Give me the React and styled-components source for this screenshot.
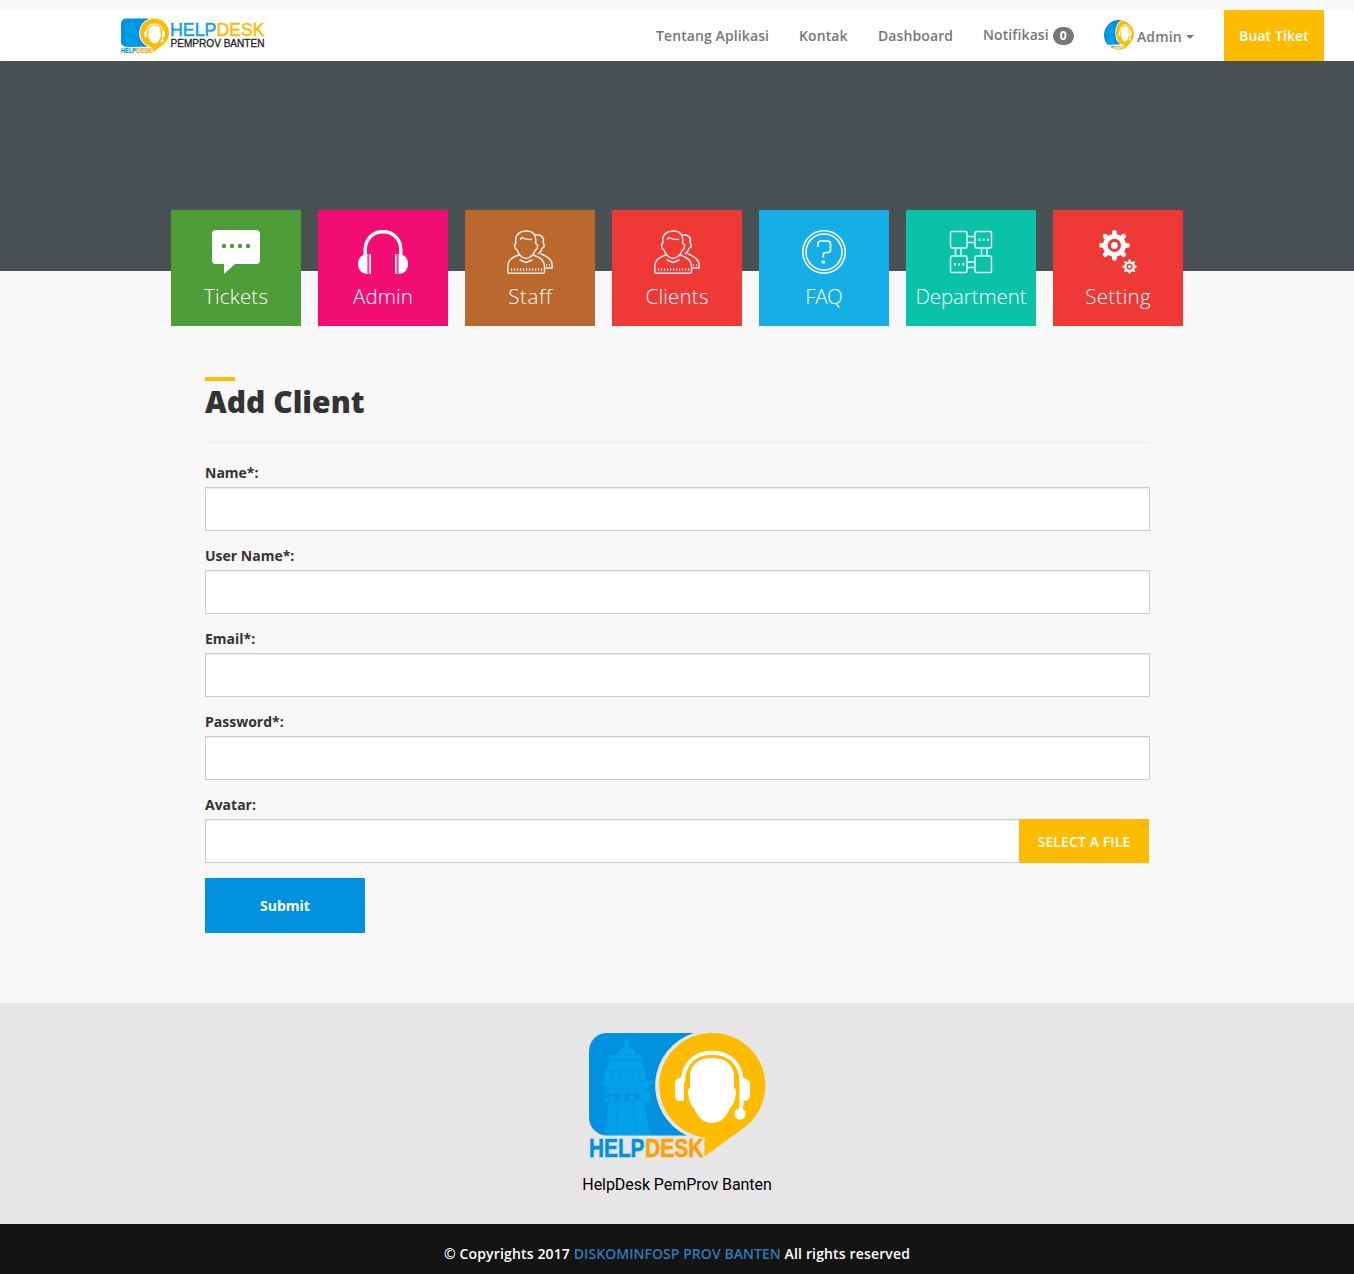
import React from 'react';
import styled, { createGlobalStyle } from 'styled-components';

const GlobalStyle = createGlobalStyle`
  * { box-sizing: border-box; }
  body {
    margin: 0;
    background: #f8f8f8;
    color: #333;
    font-family: 'Open Sans', sans-serif;
    font-size: 14px;
    overflow-x: hidden;
  }
  svg { display: block; flex: none; overflow: visible; }
`;

const Page = styled.div`
  display: flex;
  flex-direction: column;
  padding-top: 10px;
`;

const Navbar = styled.header`
  display: flex;
  justify-content: space-between;
  height: 51px;
  padding: 0 30px 0 121px;
  background: #fff;
  border-radius: 4px;
`;

const Brand = styled.a`
  display: flex;
  padding-top: 8px;
`;

const Menu = styled.nav`
  display: flex;
`;

const MenuItem = styled.a`
  display: flex;
  align-items: center;
  justify-content: ${(p) => (p.$center ? 'center' : 'flex-start')};
  gap: ${(p) => p.$gap || 0}px;
  width: ${(p) => p.$width}px;
  padding: 0 ${(p) => (p.$center ? 0 : 15)}px;
  background: ${(p) => (p.$highlight ? '#fdbc02' : 'transparent')};
  color: ${(p) => (p.$highlight ? '#fff' : '#777')};
  margin-left: ${(p) => (p.$highlight ? 15 : 0)}px;
  font-weight: 600;
  line-height: 20px;
  letter-spacing: 0.1px;
  white-space: nowrap;
`;

const Badge = styled.span`
  width: 21px;
  height: 18px;
  border-radius: 10px;
  background: #777;
  color: #fff;
  font-size: 12px;
  font-weight: 700;
  line-height: 18px;
  text-align: center;
`;

const Avatar = styled.span`
  width: 30px;
  height: 30px;
  margin-top: -1px;
  border-radius: 50%;
  overflow: hidden;
`;

const MenuLabel = styled.span`
  margin-top: ${(p) => p.$shift}px;
`;

const Caret = styled.span`
  margin: 3px 0 0 1px;
  border-top: 4px solid #777;
  border-left: 4px solid transparent;
  border-right: 4px solid transparent;
`;

const Hero = styled.div`
  height: 210px;
  background: #4a5152;
`;

const Tiles = styled.div`
  display: flex;
  justify-content: center;
  gap: 17px;
  margin-top: -61px;
`;

const Tile = styled.a`
  display: flex;
  flex-direction: column;
  align-items: center;
  width: 130px;
  height: 116px;
  padding-top: 20px;
  background: ${(p) => p.$color};
  color: #fff;
`;

const TileLabel = styled.span`
  margin-top: 7px;
  font-size: 20.5px;
  font-weight: 300;
  line-height: 30px;
  letter-spacing: ${(p) => p.$spacing}px;
  margin-right: ${(p) => -p.$spacing}px;
  white-space: nowrap;
`;

const Main = styled.main`
  width: 945px;
  height: 626px;
  margin: 51px 0 0 205px;
`;

const Title = styled.h1`
  margin: 0 0 20px;
  padding-bottom: 20px;
  border-bottom: 1px solid #eee;
  font-size: 30px;
  font-weight: 800;
  line-height: 41px;
  &::before {
    content: '';
    display: block;
    width: 30px;
    height: 4px;
    background: #fdbc02;
  }
`;

const Field = styled.div`
  display: flex;
  flex-direction: column;
  gap: 5px;
  margin-bottom: 15px;
`;

const Label = styled.label`
  font-weight: 700;
  line-height: 19px;
`;

const Input = styled.input`
  flex: 1;
  width: 100%;
  min-width: 0;
  height: 44px;
  flex-basis: 44px;
  border: 1px solid #ccc;
  border-right-width: ${(p) => (p.$joined ? 0 : 1)}px;
  border-radius: 0;
  background: #fff;
  box-shadow: inset 0 1px 1px rgba(0, 0, 0, 0.075);
  outline: none;
`;

const FileRow = styled.div`
  display: flex;
  height: 44px;
  padding-right: 1px;
`;

const FileButton = styled.button`
  width: 130px;
  padding: 1px 0 0;
  border: 0;
  background: #fdbc02;
  color: #fff;
  font: 600 14px/20px 'Open Sans', sans-serif;
  letter-spacing: 0.1px;
`;

const Submit = styled.button`
  width: 160px;
  height: 55px;
  border: 0;
  background: #0291de;
  color: #fff;
  font: 700 14px 'Open Sans', sans-serif;
`;

const Footer = styled.footer`
  display: flex;
  flex-direction: column;
  align-items: center;
  height: 221px;
  padding-top: 30px;
  background: #e6e6e6;
`;

const FooterName = styled.p`
  margin: 16px 0 0;
  color: #000;
  font: 16px/22px Roboto, sans-serif;
  letter-spacing: -0.06px;
`;

const Copyright = styled.div`
  height: 50px;
  padding-top: 20px;
  background: #141414;
  color: #fff;
  font-weight: 600;
  line-height: 20px;
  letter-spacing: 0.15px;
  text-align: center;
`;

const CopyLink = styled.a`
  color: #337ab7;
  letter-spacing: 0.05px;
`;

function Word({ x, y, width, size, color, weight = 400, stroke = 0.3, children }) {
  return (
    <text
      x={x}
      y={y}
      textLength={width}
      lengthAdjust="spacingAndGlyphs"
      fontFamily="Liberation Sans, sans-serif"
      fontWeight={weight}
      fontSize={size}
      fill={color}
      stroke={color}
      strokeWidth={stroke}
    >
      {children}
    </text>
  );
}

function Emblem({ width, height, ...rest }) {
  return (
    <svg width={width} height={height} viewBox="0 0 176 125" preserveAspectRatio="none" {...rest}>
      <path d="M18 0H105A55 55 0 0 0 98 102.500H18A18 18 0 0 1 0 84.500V18A18 18 0 0 1 18 0Z" fill="#0291de" />
      <g fill="#02a1ea">
        <path d="M37.500 3L39 8H42L39 10L40 14Q46 17 47 22H54V27H52L56 38V45H16V38L23 27H21V22H28Q29 17 35 14L36 10L33 8H36Z" />
        <path d="M16 44H56V48H64V50L57 55V59H61V69H55L61 102H15L20 69H16V59H19V55L12 50V48H16Z" />
      </g>
      <path d="M22 27H54M16 38H56M19 55H56M20 62H55M20 67H55M29 69L27 102M45 69L48 102M24 39V45M30 39V45M37 39V45M44 39V45M50 39V45M29 22H46" stroke="#0291de" strokeWidth="0.700" fill="none" />
      <path d="M17 60H20V66H17ZM26 60H30V66H26ZM36 60H40V66H36ZM46 60H50V66H46Z" fill="#0291de" />
      <path d="M123.500 0A52.500 52.500 0 0 1 156 94L115.500 123.500V104.500A52.500 52.500 0 0 1 123.500 0Z" fill="#fdbc02" />
      <path d="M94 49C94 30 106 19.700 123 19.700S152.500 30 152.500 49V72L151 80" fill="none" stroke="#fff" strokeWidth="4" />
      <path d="M95 43.500V68H91Q86 68 86 63V50Q86 46 90 45ZM151.500 43.500L157 46Q161 47 161 51V62Q161 67 156 68H151.500Z" fill="#fff" />
      <circle cx="151" cy="81" r="5.700" fill="#fff" />
      <path d="M123 25C138 25 145 33 145 44V55Q148 56 146.500 63Q145 72 141 75Q135 90 123 90T105 75Q101 72 99.500 63Q98 56 101 55V44C101 33 108 25 123 25Z" fill="#fff" />
      <Word x={0} y={123.5} width={55.5} size={25.5} weight={700} stroke={0.6} color="#0291de">HELP</Word>
      <Word x={56} y={123.5} width={58.5} size={25.5} weight={700} stroke={0.6} color="#fca103">DESK</Word>
    </svg>
  );
}

function HeaderLogo() {
  return (
    <svg width="145" height="36" viewBox="0 0 145 36">
      <Emblem x="0" y="0.500" width="48" height="34.500" />
      <Word x={49} y={17.6} width={46.5} size={17.6} stroke={0.5} color="#14a0e6">HELP</Word>
      <Word x={95.6} y={17.6} width={48} size={17.6} stroke={0.5} color="#fdbc02">DESK</Word>
      <Word x={49.5} y={29.3} width={94} size={10.5} color="#222">PEMPROV BANTEN</Word>
    </svg>
  );
}

function TicketIcon() {
  return (
    <svg width="48" height="44" viewBox="0 0 48 44">
      <path d="M4 0H44Q48 0 48 4V30Q48 34 44 34H23L12 44V34H4Q0 34 0 30V4Q0 0 4 0Z" fill="#fff" />
      <g fill="#4f9d38">
        {[12, 20, 28, 36].map((x) => <circle key={x} cx={x} cy="16" r="2.200" />)}
      </g>
    </svg>
  );
}

function HeadphonesIcon() {
  return (
    <svg width="50" height="44" viewBox="0 0 50 44">
      <path d="M7.200 26V19.500C7.200 9 15 1.700 25 1.700S42.800 9 42.800 19.500V26" fill="none" stroke="#fff" strokeWidth="3.400" />
      <path d="M9 24V44Q0 43 0 34T9 24ZM41 24V44Q50 43 50 34T41 24Z" fill="#fff" />
      <path d="M12.200 24V44M37.800 24V44" stroke="#fff" strokeWidth="1.600" />
      <path d="M9.800 24V44M40.200 24V44" stroke="#fff" strokeWidth="1.200" opacity="0.600" />
    </svg>
  );
}

function PeopleIcon() {
  return (
    <svg width="46" height="44" viewBox="0 0 46 44" fill="none" stroke="#fff" strokeOpacity="0.880" strokeWidth="1.500" strokeLinecap="round" strokeLinejoin="round">
      <path d="M9 13C7 4 14 1 19.500 1S30 4 28.500 13L30.500 15Q31 19 28.500 20C27 24 23 28.500 19 28.500S11.500 24 10 20Q7 18 7.800 14Z" />
      <path d="M28 5C34 4 38 8 36 12Q37.500 14 37 17L35 18.500Q34 22 31.500 23.500M13.500 9L15 7.500Q18 9.500 24.500 9.500" />
      <path d="M12 25Q1 28 .8 36V42Q1 43.300 2 43.300H36Q37.500 43.300 37.500 42V36Q37 28 26 25M34 24Q45 28 45.200 35V38H39" />
      <path d="M13 30L19 32.500L25 30" />
      <path d="M4 39.500H36" strokeWidth="2.500" strokeDasharray="1.200 1.800" strokeLinecap="butt" />
      <path d="M39 35H43" strokeWidth="2" strokeDasharray="1 2" strokeLinecap="butt" />
    </svg>
  );
}

function QuestionIcon() {
  return (
    <svg width="44" height="44" viewBox="0 0 44 44" fill="none" stroke="#fff" strokeWidth="1.600">
      <circle cx="22" cy="22" r="21.200" />
      <circle cx="22" cy="22" r="18" />
      <path d="M15.800 17V14Q15.800 11 19 11H25.500Q28.500 11 28.500 14V19Q28.500 22.500 25.500 22.500H24Q21.300 22.500 21.300 25V28" />
      <circle cx="21.300" cy="32" r="1.800" fill="#fff" stroke="none" />
    </svg>
  );
}

function DepartmentIcon() {
  return (
    <svg width="44" height="44" viewBox="0 0 44 44" fill="none" stroke="#fff" strokeOpacity="0.880" strokeWidth="1.500">
      {[[1.5, 1.5], [26, 1.5], [1.5, 26], [26, 26]].map(([x, y]) => (
        <rect key={`${x}-${y}`} x={x} y={y} width="16.500" height="16.500" rx="1.500" />
      ))}
      <path d="M18 6.500H26M18 12.500H26M18 32H26M18 37.500H26M6.500 18V26M12 18V26M32.500 18V26M38 18V26" />
      <path d="M29.500 9.800H40M5 34.300H15.500" strokeWidth="2.600" strokeDasharray="1.800 2.400" />
    </svg>
  );
}

function Gear({ cx, cy, scale }) {
  return (
    <g transform={`translate(${cx} ${cy}) scale(${scale})`}>
      {[0, 45, 90, 135].map((a) => (
        <path key={a} d="M0 -13V13" stroke="#fff" strokeWidth="4.800" strokeLinecap="round" transform={`rotate(${a})`} />
      ))}
      <circle r="11.500" fill="#fff" />
      <circle r="5" fill="#fff" stroke="#ee3937" strokeWidth="3.200" />
    </g>
  );
}

function GearsIcon() {
  return (
    <svg width="38" height="44" viewBox="0 0 38 44">
      <Gear cx={15.4} cy={15.4} scale={1} />
      <Gear cx={30.6} cy={36.6} scale={0.47} />
    </svg>
  );
}

const tiles = [
  { name: 'Tickets', color: '#4f9d38', Icon: TicketIcon, spacing: 0.2 },
  { name: 'Admin', color: '#f20d74', Icon: HeadphonesIcon, spacing: 0.1 },
  { name: 'Staff', color: '#ba682d', Icon: PeopleIcon, spacing: 0.6 },
  { name: 'Clients', color: '#ee3937', Icon: PeopleIcon, spacing: 0.2 },
  { name: 'FAQ', color: '#15aee7', Icon: QuestionIcon, spacing: -0.5 },
  { name: 'Department', color: '#0ac2a7', Icon: DepartmentIcon, spacing: -0.1 },
  { name: 'Setting', color: '#ee3937', Icon: GearsIcon, spacing: 0.3 },
];

const fields = [
  { id: 'name', label: 'Name*:', type: 'text' },
  { id: 'username', label: 'User Name*:', type: 'text' },
  { id: 'email', label: 'Email*:', type: 'email' },
  { id: 'password', label: 'Password*:', type: 'password' },
];

export default function App() {
  return (
    <Page>
      <GlobalStyle />
      <Navbar>
        <Brand><HeaderLogo /></Brand>
        <Menu>
          <MenuItem $width={143}>Tentang Aplikasi</MenuItem>
          <MenuItem $width={79}>Kontak</MenuItem>
          <MenuItem $width={105}>Dashboard</MenuItem>
          <MenuItem $width={121} $gap={4}>
            <MenuLabel $shift={-2}>Notifikasi</MenuLabel>
            <Badge>0</Badge>
          </MenuItem>
          <MenuItem $width={120} $gap={3}>
            <Avatar><Emblem width={30} height={30} /></Avatar>
            <MenuLabel $shift={2}>Admin</MenuLabel>
            <Caret />
          </MenuItem>
          <MenuItem $width={100} $highlight $center>Buat Tiket</MenuItem>
        </Menu>
      </Navbar>
      <Hero />
      <Tiles>
        {tiles.map(({ name, color, Icon, spacing }) => (
          <Tile key={name} $color={color}>
            <Icon />
            <TileLabel $spacing={spacing}>{name}</TileLabel>
          </Tile>
        ))}
      </Tiles>
      <Main>
        <Title>Add Client</Title>
        {fields.map(({ id, label, type }) => (
          <Field key={id}>
            <Label htmlFor={id}>{label}</Label>
            <Input id={id} type={type} />
          </Field>
        ))}
        <Field>
          <Label htmlFor="avatar">Avatar:</Label>
          <FileRow>
            <Input id="avatar" $joined />
            <FileButton>SELECT A FILE</FileButton>
          </FileRow>
        </Field>
        <Submit>Submit</Submit>
      </Main>
      <Footer>
        <Emblem width={176} height={125} />
        <FooterName>HelpDesk PemProv Banten</FooterName>
      </Footer>
      <Copyright>
        © Copyrights 2017 <CopyLink>DISKOMINFOSP PROV BANTEN</CopyLink> All rights reserved
      </Copyright>
    </Page>
  );
}
